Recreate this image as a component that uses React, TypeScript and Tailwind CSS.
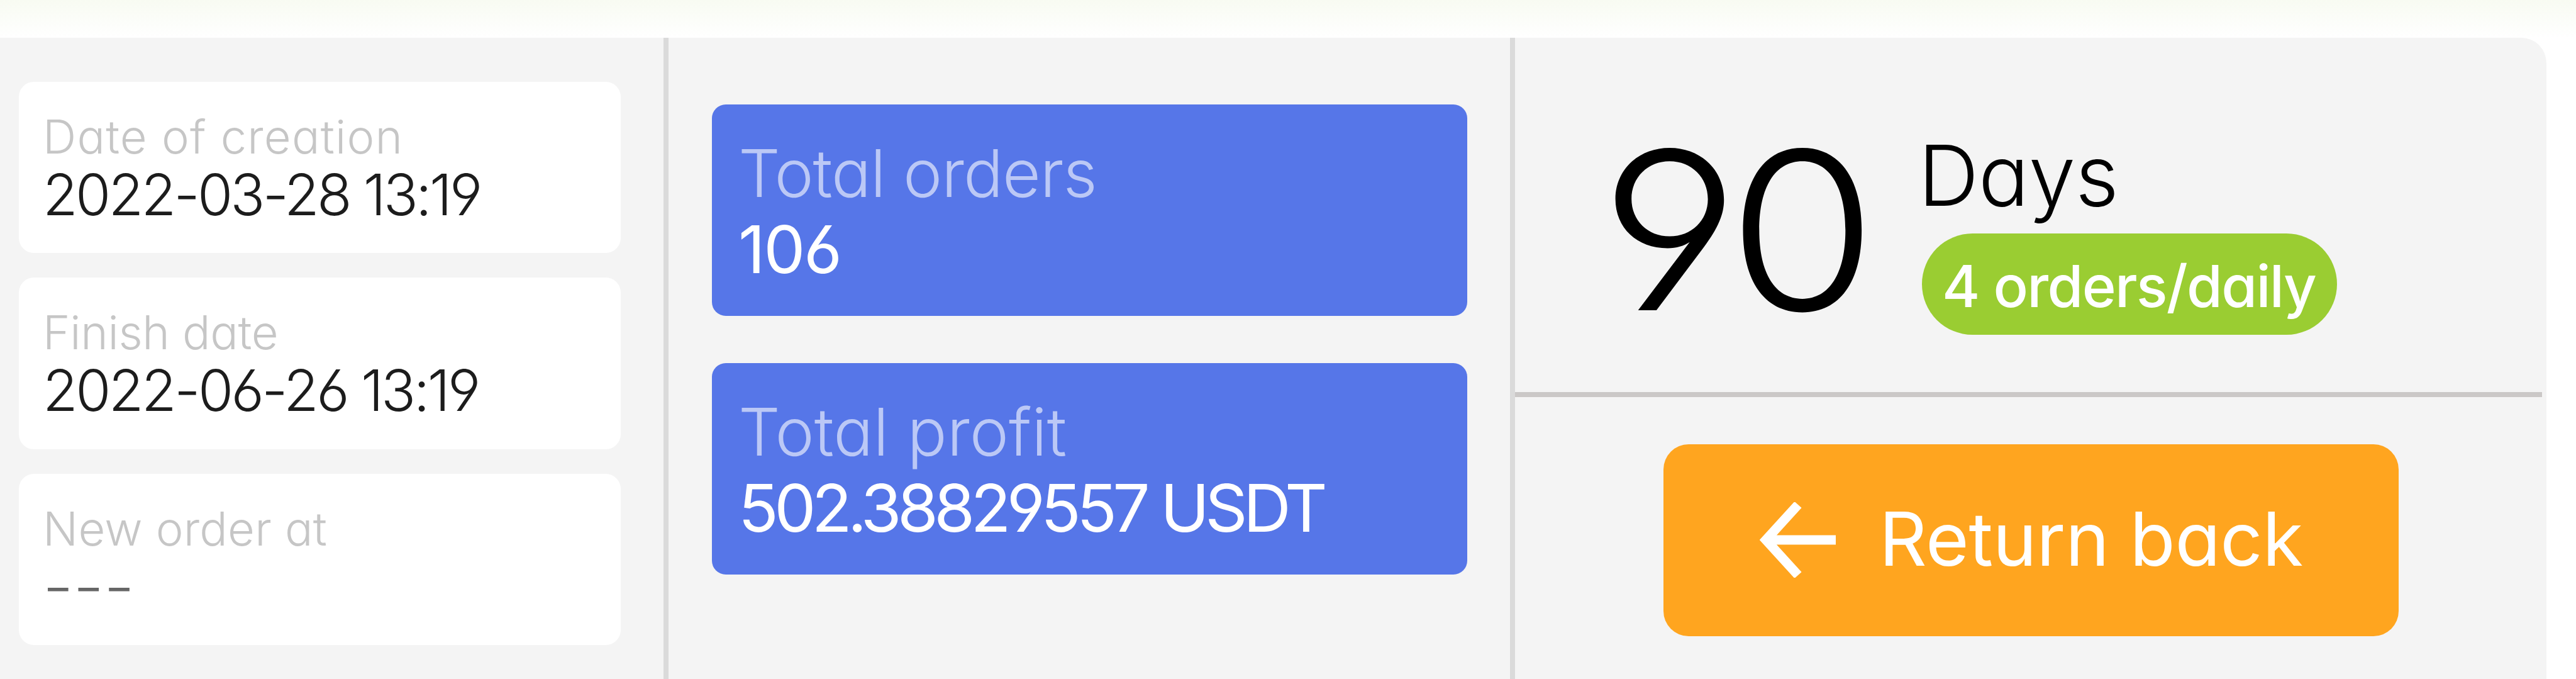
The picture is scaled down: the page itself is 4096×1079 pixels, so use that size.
type Entry = { label: string; value: string; labelClass: string; valueClass: string };

const dates: Entry[] = [
  { label: "Date of creation", value: "2022-03-28 13:19", labelClass: "tracking-[1.2px]", valueClass: "tracking-[-3.8px] text-[#1c1c1c]" },
  { label: "Finish date", value: "2022-06-26 13:19", labelClass: "tracking-[-0.3px]", valueClass: "tracking-[-3.6px] text-[#1c1c1c]" },
  { label: "New order at", value: "---", labelClass: "tracking-[0.2px]", valueClass: "origin-left scale-x-[1.18] text-[#666]" },
];

const totals: Entry[] = [
  { label: "Total orders", value: "106", labelClass: "tracking-[-1.1px]", valueClass: "tracking-[-2.5px]" },
  { label: "Total profit", value: "502.38829557 USDT", labelClass: "", valueClass: "tracking-[-6.7px]" },
];

function DateCard({ label, value, labelClass, valueClass }: Entry) {
  return (
    <div className="flex h-[272.5px] w-[957px] flex-col gap-[10px] rounded-[24px] bg-white pt-[50px] pl-[38px] font-light whitespace-nowrap">
      <div className={`text-[74px] leading-[74px] text-[#c6c6c6] ${labelClass}`}>{label}</div>
      <div className={`text-[91px] leading-[91px] ${valueClass}`}>{value}</div>
    </div>
  );
}

function TotalCard({ label, value, labelClass, valueClass }: Entry) {
  return (
    <div className="flex h-[336px] w-[1201px] flex-col gap-[16px] rounded-[22px] bg-[#5676e8] pt-[56px] pl-[42px] whitespace-nowrap">
      <div className={`text-[105px] leading-[105px] font-light text-[#bbc8f6] ${labelClass}`}>{label}</div>
      <div className={`text-[105px] leading-[105px] font-normal text-white ${valueClass}`}>{value}</div>
    </div>
  );
}

export default function App() {
  return (
    <div className="flex h-[1079px] w-[4096px] flex-col overflow-hidden bg-white font-['Inter',sans-serif] [font-feature-settings:'cv11','cv03','cv04']">
      <div className="h-[60px] shrink-0 bg-linear-to-b from-[#f8fbf2] to-white" />
      <div className="flex w-[4049px] flex-1 rounded-tr-[40px] bg-[#f4f4f4]">
        <section className="flex w-[1063px] flex-col gap-[39px] border-r-8 border-[#dadada] pt-[69.5px] pl-[30px]">
          {dates.map((d) => (
            <DateCard key={d.label} {...d} />
          ))}
        </section>
        <section className="flex w-[1346px] flex-col gap-[75px] border-r-8 border-[#dadada] pt-[106px] pl-[69px]">
          {totals.map((t) => (
            <TotalCard key={t.label} {...t} />
          ))}
        </section>
        <section className="flex flex-1 flex-col">
          <div className="mr-[7px] flex h-[571px] border-b-8 border-[#cbc8c7] pl-[135px]">
            <div className="mt-[127px] w-[505px] origin-left scale-x-[1.1] text-[350px] leading-[358px] font-[330] tracking-[-17px] text-black">90</div>
            <div className="flex flex-col items-start pt-[150px]">
              <div className="ml-px text-[134px] leading-[137px] font-light tracking-[-0.6px] text-black">Days</div>
              <div className="mt-[24px] ml-[7px] flex h-[161px] w-[660px] rounded-full bg-[#9acd32] pt-[38px] pl-[32px] text-[92px] leading-[92px] font-medium tracking-[-1.7px] whitespace-nowrap text-white">
                4 orders/daily
              </div>
            </div>
          </div>
          <button className="mt-[75px] ml-[236px] flex h-[305px] w-[1169px] items-start rounded-[40px] bg-[#ffa51f] pt-[87px] pl-[153px] text-white">
            <svg className="mt-[5px] h-[120px] w-[121px]" viewBox="0 0 121 120" fill="none" stroke="currentColor" strokeWidth="15">
              <path d="M121 60H10M61 4L10 60L61 116" />
            </svg>
            <span className="mt-[3px] ml-[69px] text-[118px] leading-[120px] font-normal tracking-[-0.3px] whitespace-nowrap">Return back</span>
          </button>
        </section>
      </div>
    </div>
  );
}
